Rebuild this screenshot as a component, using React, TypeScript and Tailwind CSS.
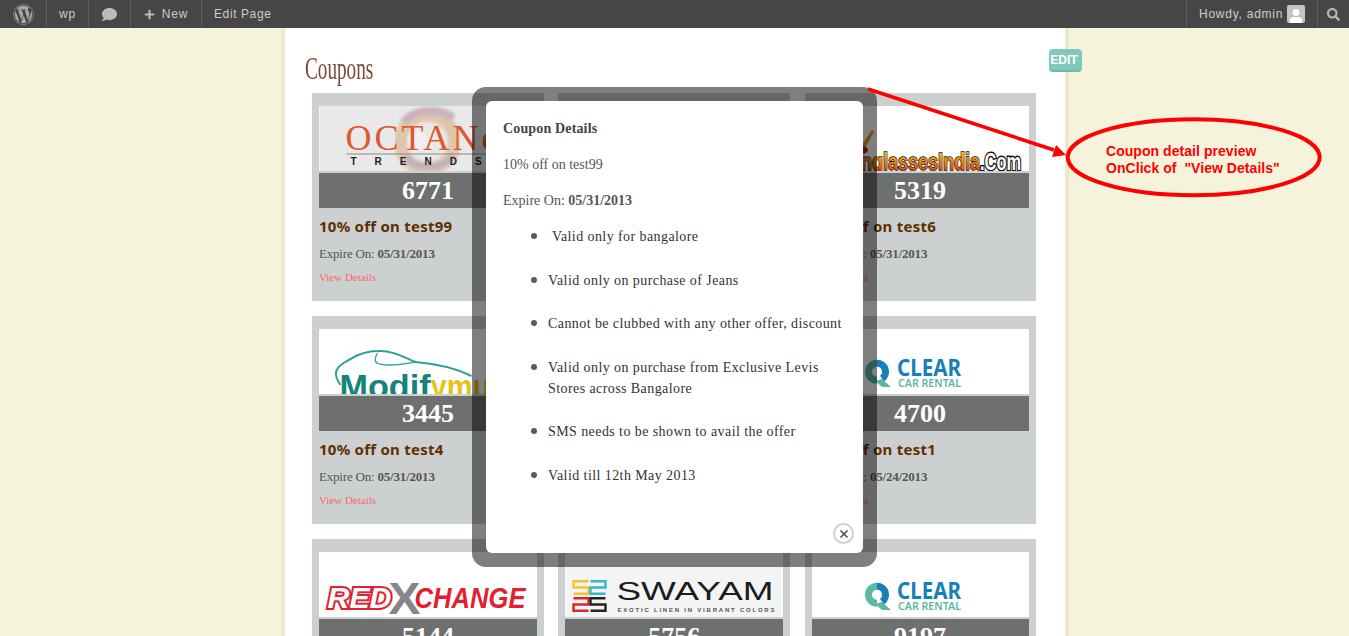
import { ReactNode } from "react";
import { FaComment, FaPlus, FaSearch, FaUser, FaWordpress } from "react-icons/fa";
import { X } from "lucide-react";

const SANS = "Liberation Sans, Arial, sans-serif";
const SERIF = "Liberation Serif, Times New Roman, serif";

function OctaneLogo() {
  return (
    <svg viewBox="0 0 217 65" className="block h-full w-full">
      <defs>
        <filter id="soft">
          <feGaussianBlur stdDeviation="1.6" />
        </filter>
      </defs>
      <rect width="217" height="65" fill="#e9e9e9" />
      <g filter="url(#soft)" opacity="0.6">
        <circle cx="108" cy="36" r="27" fill="none" stroke="#d8b083" strokeWidth="13" />
        <path d="M84 16 C94 4 118 0 134 12" fill="none" stroke="#b58fa0" strokeWidth="8" />
        <path d="M86 50 C96 64 122 64 134 50" fill="none" stroke="#a88d9c" strokeWidth="7" />
        <circle cx="98" cy="34" r="9" fill="#f5f5f5" />
      </g>
      <text x="26" y="44" fontFamily={SERIF} fontSize="36" fill="#e0582b" textLength="152">
        OCTANe
      </text>
      <rect x="27" y="47.5" width="190" height="1" fill="#8a8a8a" />
      <text x="31" y="59" fontFamily={SANS} fontSize="10" fontWeight="700" fill="#222" letterSpacing="18">TRENDS</text>
    </svg>
  );
}

function SunglassesLogo() {
  return (
    <svg viewBox="0 0 217 65" className="block h-full w-full">
      <defs>
        <linearGradient id="sg" x1="0" y1="0" x2="0" y2="1">
          <stop offset="0" stopColor="#ffd21f" />
          <stop offset="1" stopColor="#d0300c" />
        </linearGradient>
      </defs>
      <rect width="217" height="65" fill="#fff" />
      <path d="M49 40 L60 24 L62 26 L53 42 Z" fill="#dc9a1f" />
      <ellipse cx="50" cy="44" rx="6" ry="4" fill="#b31b1b" />
      <text x="26" y="64" fontFamily={SANS} fontSize="24" fontWeight="700" fill="url(#sg)" stroke="#1a1a1a" strokeWidth="1.6" paintOrder="stroke" textLength="142" lengthAdjust="spacingAndGlyphs">SunglassesIndia</text>
      <text x="168" y="64" fontFamily={SANS} fontSize="24" fontWeight="700" fill="#fff" stroke="#111" strokeWidth="3" paintOrder="stroke" textLength="41" lengthAdjust="spacingAndGlyphs">.Com</text>
    </svg>
  );
}

function ModifyLogo() {
  return (
    <svg viewBox="0 0 217 65" className="block h-full w-full">
      <rect width="217" height="65" fill="#fff" />
      <path d="M21 56 C14 46 15 40 24 34 C34 28 44 22 58 22 C72 21 84 28 96 33 C120 35 138 40 152 47" fill="none" stroke="#2ba193" strokeWidth="2" />
      <path d="M58 24 C52 34 58 36 70 36 C82 36 90 34 96 33" fill="none" stroke="#2ba193" strokeWidth="1.3" />
      <text x="20" y="69" fontFamily={SANS} fontSize="33" fontWeight="700" fill="#15837a" textLength="91" lengthAdjust="spacingAndGlyphs">Modif</text>
      <text x="111" y="69" fontFamily={SANS} fontSize="33" fontWeight="700" fill="#e2c51c" textLength="60" lengthAdjust="spacingAndGlyphs">ymu</text>
    </svg>
  );
}

function ClearLogo() {
  return (
    <svg viewBox="0 0 217 65" className="block h-full w-full">
      <rect width="217" height="65" fill="#fff" />
      <path d="M65 34.2 A8.5 8.5 0 0 0 65 51.2" fill="none" stroke="#5cb8a5" strokeWidth="7" />
      <path d="M65 34.2 A8.5 8.5 0 0 1 70 49.6" fill="none" stroke="#1581b8" strokeWidth="7" />
      <path d="M63 52 L70 50 L79 58 L70 58 Z" fill="#5cb8a5" />
      <text x="85" y="47" fontFamily="Noto Sans, sans-serif" fontSize="22.5" fontWeight="700" fill="#1581b8" textLength="64" lengthAdjust="spacingAndGlyphs">CLEAR</text>
      <text x="86" y="58" fontFamily="Noto Sans, sans-serif" fontSize="11.5" fontWeight="600" fill="#5cb8a5" textLength="63" lengthAdjust="spacingAndGlyphs">CAR RENTAL</text>
    </svg>
  );
}

function RedXChangeLogo() {
  return (
    <svg viewBox="0 0 217 65" className="block h-full w-full">
      <rect width="217" height="65" fill="#fff" />
      <text x="8" y="56" fontFamily={SANS} fontSize="29" fontWeight="700" fontStyle="italic" fill="#fff" stroke="#e2202f" strokeWidth="4" paintOrder="stroke" textLength="64" lengthAdjust="spacingAndGlyphs">RED</text>
      <text x="69" y="62" fontFamily={SANS} fontSize="44" fontWeight="700" fill="#86868a" textLength="32" lengthAdjust="spacingAndGlyphs">X</text>
      <text x="95" y="56" fontFamily={SANS} fontSize="29" fontStyle="italic" fontWeight="700" fill="#e2202f" textLength="111" lengthAdjust="spacingAndGlyphs">CHANGE</text>
    </svg>
  );
}

// one square of the Swayam mark: an S, or a mirrored S when flip is set
function Maze({ x, y, color, flip }: { x: number; y: number; color: string; flip?: boolean }) {
  const d = flip
    ? `M${x} ${y + 1.2}h15v6.3h-15v6.3h15`
    : `M${x + 15} ${y + 1.2}h-15v6.3h15v6.3h-15`;
  return <path d={d} fill="none" stroke={color} strokeWidth="2.4" />;
}

function SwayamLogo() {
  return (
    <svg viewBox="0 0 217 65" className="block h-full w-full">
      <rect width="217" height="65" fill="#f4f4f4" />
      <Maze x={8} y={28} color="#f5c32c" />
      <Maze x={25} y={28} color="#35b7c9" flip />
      <Maze x={8} y={45} color="#d8262c" flip />
      <Maze x={25} y={45} color="#222" />
      <text x="51" y="48" fontFamily={SANS} fontSize="25.5" fill="#1c1c1c" textLength="157" lengthAdjust="spacingAndGlyphs">SWAYAM</text>
      <text x="52" y="60" fontFamily={SANS} fontSize="6" fontWeight="700" fill="#555" textLength="157">EXOTIC LINEN IN VIBRANT COLORS</text>
    </svg>
  );
}

type Coupon = { logo?: ReactNode; code?: string; title?: string; expires?: string };

const coupons: Coupon[] = [
  { logo: <OctaneLogo />, code: "6771", title: "10% off on test99", expires: "05/31/2013" },
  {},
  { logo: <SunglassesLogo />, code: "5319", title: "10% off on test6", expires: "05/31/2013" },
  { logo: <ModifyLogo />, code: "3445", title: "10% off on test4", expires: "05/31/2013" },
  {},
  { logo: <ClearLogo />, code: "4700", title: "10% off on test1", expires: "05/24/2013" },
  { logo: <RedXChangeLogo />, code: "5144" },
  { logo: <SwayamLogo />, code: "5756" },
  { logo: <ClearLogo />, code: "9197" },
];

const terms = [
  "\u00a0Valid only for bangalore",
  "Valid only on purchase of Jeans",
  "Cannot be clubbed with any other offer, discount",
  "Valid only on purchase from Exclusive Levis Stores across Bangalore",
  "SMS needs to be shown to avail the offer",
  "Valid till 12th May 2013",
];

function CouponCard({ logo, code, title, expires }: Coupon) {
  return (
    <div className="h-[208px] bg-[#cdd0d1] px-[7px] pt-[13px]">
      <div className="h-[65px] overflow-hidden bg-white">{logo}</div>
      <div className="mt-[2px] flex h-[35px] items-center justify-center bg-[#6e7070] font-['Liberation_Serif',serif] text-[26px] font-bold text-white">
        {code}
      </div>
      {title && (
        <h3 className="mt-[7px] font-['Noto_Sans',sans-serif] text-[15px] leading-[22px] font-bold tracking-[0.25px] text-[#5f2f00]">
          {title}
        </h3>
      )}
      {expires && (
        <p className="mt-[8px] font-['Liberation_Serif',serif] text-[13px] leading-[18px] tracking-[-0.2px] text-[#555]">
          Expire On: <span className="font-bold">{expires}</span>
        </p>
      )}
      {title && (
        <a className="mt-[6px] block font-['Liberation_Serif',serif] text-[11px] leading-[16px] text-[#f56a6a]">View Details</a>
      )}
    </div>
  );
}

function AdminItem({ children, className }: { children: ReactNode; className: string }) {
  return <div className={`flex h-full items-center justify-center border-r border-[#5c5c5c] ${className}`}>{children}</div>;
}

function AdminBar() {
  return (
    <div className="flex h-[28px] items-center justify-between bg-[#464646] font-['Liberation_Sans',sans-serif] text-[12px] tracking-[0.75px] text-[#cccccc]">
      <div className="flex h-full">
        <AdminItem className="w-[47px]"><FaWordpress className="text-[21px] text-[#a9a9a9]" /></AdminItem>
        <AdminItem className="w-[42px]">wp</AdminItem>
        <AdminItem className="w-[42px]"><FaComment className="text-[15px] text-[#bbbbbb]" /></AdminItem>
        <AdminItem className="w-[71px] gap-[7px]"><FaPlus className="text-[11px] text-[#bbbbbb]" />New</AdminItem>
        <div className="flex items-center pl-[12px] tracking-[0.6px]">Edit Page</div>
      </div>
      <div className="flex h-full">
        <div className="flex w-[132px] items-center gap-[4px] border-x border-[#5c5c5c] pl-[12px]">
          Howdy, admin
          <span className="flex h-[18px] w-[18px] items-end justify-center overflow-hidden rounded-[2px] bg-[#c4c4c4]">
            <FaUser className="text-[14px] text-white" />
          </span>
        </div>
        <div className="flex w-[31px] items-center justify-center">
          <FaSearch className="text-[13px] text-[#bbbbbb]" />
        </div>
      </div>
    </div>
  );
}

function CouponModal() {
  return (
    <div className="absolute top-[87px] left-[472px] h-[480px] w-[405px] rounded-[14px] bg-black/50 p-[14px]">
      <div className="relative h-full rounded-[6px] bg-white px-[17px] pt-[17px] font-['Liberation_Serif',serif] text-[14px] leading-[21px] text-[#555]">
        <h4 className="font-bold tracking-[0.15px] text-[#444]">Coupon Details</h4>
        <p className="mt-[15px]">10% off on test99</p>
        <p className="mt-[15px]">
          Expire On: <span className="font-bold">05/31/2013</span>
        </p>
        <ul className="mt-[15px] list-none pl-[45px] text-[#333]">
          {terms.map((term) => (
            <li
              key={term}
              className="relative mb-[22.5px] tracking-[0.42px] before:absolute before:top-[7px] before:left-[-17px] before:h-[6px] before:w-[6px] before:rounded-full before:bg-[#5a5a5a]"
            >
              {term}
            </li>
          ))}
        </ul>
        <button className="absolute right-[9px] bottom-[9px] flex h-[21px] w-[21px] items-center justify-center rounded-full border-2 border-[#cfcfcf] bg-white">
          <X className="h-[12px] w-[12px] text-[#555]" strokeWidth={3.5} />
        </button>
      </div>
    </div>
  );
}

function Annotation() {
  return (
    <>
      <svg className="pointer-events-none absolute top-0 left-0" width="1349" height="636" fill="none">
        <line x1="868" y1="89" x2="1054" y2="150" stroke="#ff0000" strokeWidth="3.5" />
        <polygon points="1066,155 1052,157 1056,145" fill="#ff0000" />
        <ellipse cx="1193.7" cy="157.3" rx="126" ry="38" stroke="#ff0000" strokeWidth="4" />
      </svg>
      <p className="absolute top-[143px] left-[1106px] font-['Liberation_Sans',sans-serif] text-[14px] leading-[17px] font-bold tracking-[0.05px] whitespace-pre text-[#ff0000]">
        {'Coupon detail preview\nOnClick of  "View Details"'}
      </p>
    </>
  );
}

export default function App() {
  return (
    <div className="relative h-[636px] overflow-hidden bg-[#f6f3dd]">
      <AdminBar />
      <main className="ml-[281px] h-[608px] w-[788px] border-x-4 border-[#efe9cb] bg-white">
        <h1 className="flex h-[65px] items-center pt-[14px] pl-[20px] font-['Liberation_Serif',serif] text-[32px] text-[#7b4a33]">
          <span className="origin-left scale-x-[0.6]">Coupons</span>
        </h1>
        <div className="ml-[27px] grid w-[724px] grid-cols-[232px_232px_231px] gap-x-[14.25px] gap-y-[15px]">
          {coupons.map((coupon, i) => (
            <CouponCard key={i} {...coupon} />
          ))}
        </div>
      </main>
      <a className="absolute top-[49px] left-[1049px] flex h-[23px] w-[33px] items-center justify-center rounded-[4px] border-b-2 border-[#72b8ab] bg-[#7fc9bb] pr-[3px] font-['Liberation_Sans',sans-serif] text-[12px] font-bold text-white">
        EDIT
      </a>
      <CouponModal />
      <Annotation />
    </div>
  );
}
